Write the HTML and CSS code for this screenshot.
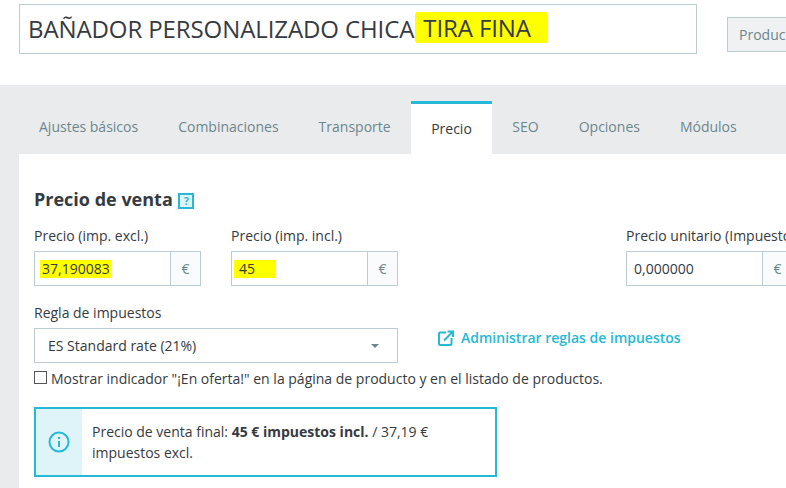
FILE: index.html
```html
<!DOCTYPE html>
<html lang="es">
<head>
    <meta charset="UTF-8">
    <title>Precio de producto</title>
    <link rel="stylesheet" href="styles.css">
</head>
<body>
    <div class="header">
        <div class="title-box">BAÑADOR PERSONALIZADO CHICA<span class="title-mark">TIRA FINA</span></div>
        <div class="type-btn">Producto estándar</div>
    </div>

    <div class="band">
        <ul class="tabs">
            <li>Ajustes básicos</li>
            <li>Combinaciones</li>
            <li>Transporte</li>
            <li class="active">Precio</li>
            <li>SEO</li>
            <li>Opciones</li>
            <li>Módulos</li>
        </ul>

        <div class="panel">
            <h2>Precio de venta <span class="help">?</span></h2>

            <div class="price-row">
                <div class="field">
                    <label>Precio (imp. excl.)</label>
                    <div class="input-group">
                        <div class="input"><span class="mark mark-excl">37,190083</span></div>
                        <div class="addon">€</div>
                    </div>
                </div>
                <div class="field">
                    <label>Precio (imp. incl.)</label>
                    <div class="input-group">
                        <div class="input"><span class="mark mark-incl">45</span></div>
                        <div class="addon">€</div>
                    </div>
                </div>
                <div class="field field-unit">
                    <label>Precio unitario (Impuestos excl.)</label>
                    <div class="input-group">
                        <div class="input">0,000000</div>
                        <div class="addon">€</div>
                    </div>
                </div>
            </div>

            <div class="tax-row">
                <div class="field field-tax">
                    <label>Regla de impuestos</label>
                    <div class="select">ES Standard rate (21%)<span class="caret"></span></div>
                </div>
                <a class="tax-link">
                    <svg width="16" height="16" viewBox="0 0 16 16" fill="none" stroke="#25b9d7" stroke-width="2">
                        <path d="M8 2.500H2a1 1 0 0 0-1 1V14a1 1 0 0 0 1 1h10.500a1 1 0 0 0 1-1V8"/>
                        <path d="M6 10.500L14 2.500M9.500 1.500H15V7"/>
                    </svg>
                    Administrar reglas de impuestos
                </a>
            </div>

            <div class="check-row">
                <span class="checkbox"></span>
                Mostrar indicador "¡En oferta!" en la página de producto y en el listado de productos.
            </div>

            <div class="alert">
                <div class="alert-icon">
                    <svg width="22" height="22" viewBox="0 0 22 22" fill="none" stroke="#25b9d7" stroke-width="2">
                        <circle cx="11" cy="11" r="9.500"/>
                        <path d="M11 10v6M11 6v2"/>
                    </svg>
                </div>
                <p>Precio de venta final: <b>45 € impuestos incl.</b> / 37,19 € impuestos excl.</p>
            </div>
        </div>
    </div>
</body>
</html>
```

FILE: styles.css
```css
html, body {
    margin: 0;
    height: 488px;
    overflow: hidden;
}
body {
    font-family: "Open Sans", sans-serif;
    font-size: 14px;
    color: #363a41;
    background: #fff;
}

/* top */
.header {
    display: flex;
    align-items: flex-start;
    height: 85px;
    padding: 4px 0 0 19px;
    box-sizing: border-box;
    white-space: nowrap;
    overflow: hidden;
}
.title-box {
    flex: none;
    width: 678px;
    height: 50px;
    line-height: 48px;
    padding-left: 8px;
    box-sizing: border-box;
    border: 1px solid #bbcdd2;
    font-size: 24px;
    letter-spacing: -0.1px;
}
.title-mark {
    display: inline-block;
    height: 31px;
    line-height: 31px;
    margin-left: 1px;
    padding: 0 17px 0 8px;
    border-radius: 3px;
    background: #ffff00;
    vertical-align: 1px;
}
.type-btn {
    flex: none;
    margin: 13px 0 0 30px;
    height: 35px;
    line-height: 33px;
    padding: 0 11px;
    box-sizing: border-box;
    border: 1px solid #bbcdd2;
    background: #eff1f2;
    color: #6c868e;
}

/* gray band and tabs */
.band {
    background: #eaebec;
    padding: 16px 0 0 19px;
    height: 403px;
    box-sizing: border-box;
}
.tabs {
    display: flex;
    list-style: none;
    margin: 0;
    padding: 0;
    height: 53px;
}
.tabs li {
    padding: 16px 20px 0;
    color: #6c868e;
    line-height: 20px;
}
.tabs li.active {
    border-top: 3px solid #25b9d7;
    background: #fff;
    color: #363a41;
    padding: 15px 20.500px 0;
}

/* panel */
.panel {
    background: #fff;
    height: 334px;
    padding: 33px 0 0 15px;
    box-sizing: border-box;
    white-space: nowrap;
    overflow: hidden;
}
h2 {
    margin: 0 0 15px;
    font-size: 18px;
    line-height: 24px;
    font-weight: 700;
}
.help {
    display: inline-block;
    width: 16px;
    height: 16px;
    margin-left: 1px;
    box-sizing: border-box;
    border: 2px solid #25b9d7;
    background: #def4f8;
    color: #25b9d7;
    font-size: 10px;
    line-height: 12px;
    text-align: center;
    vertical-align: 1px;
}
label {
    display: block;
    line-height: 20px;
    margin-bottom: 5px;
}
.price-row {
    display: flex;
    gap: 30px;
}
.field {
    width: 167px;
    flex: none;
}
.field-unit {
    margin-left: 198px;
}
.input-group {
    display: flex;
    height: 35px;
    border: 1px solid #bbcdd2;
    box-sizing: border-box;
}
.input {
    flex: 1;
    line-height: 33px;
    padding-left: 7px;
}
.mark {
    display: inline-block;
    height: 18px;
    line-height: 18px;
    background: #ffff00;
}
.mark-excl {
    margin-left: -2px;
    padding: 0 1px 0 2px;
}
.mark-incl {
    margin-left: -5px;
    padding: 0 21px 0 5px;
}
.addon {
    flex: none;
    width: 29px;
    border-left: 1px solid #bbcdd2;
    background: #fafbfc;
    color: #6c868e;
    text-align: center;
    line-height: 33px;
}

.tax-row {
    display: flex;
    align-items: flex-end;
    margin-top: 17px;
}
.field-tax {
    width: 364px;
}
.select {
    position: relative;
    height: 35px;
    line-height: 33px;
    padding-left: 13px;
    box-sizing: border-box;
    border: 1px solid #bbcdd2;
}
.caret {
    position: absolute;
    right: 18px;
    top: 15px;
    border-top: 4px solid #6c868e;
    border-left: 4px solid transparent;
    border-right: 4px solid transparent;
}
.tax-link {
    display: flex;
    align-items: center;
    gap: 7px;
    margin: 0 0 15px 40px;
    color: #25b9d7;
    font-weight: 600;
    line-height: 20px;
}

.check-row {
    display: flex;
    align-items: center;
    gap: 4px;
    margin-top: 6px;
    line-height: 20px;
}
.checkbox {
    width: 13px;
    height: 13px;
    box-sizing: border-box;
    border: 1px solid #555;
    margin-top: -3px;
}

.alert {
    display: flex;
    width: 463px;
    height: 70px;
    margin-top: 18px;
    box-sizing: border-box;
    border: 2px solid #25b9d7;
}
.alert-icon {
    flex: none;
    width: 46px;
    display: flex;
    align-items: center;
    justify-content: center;
    background: #def4f8;
}
.alert p {
    margin: 0;
    padding: 12px 20px 0 10px;
    line-height: 21px;
    white-space: normal;
}
```
